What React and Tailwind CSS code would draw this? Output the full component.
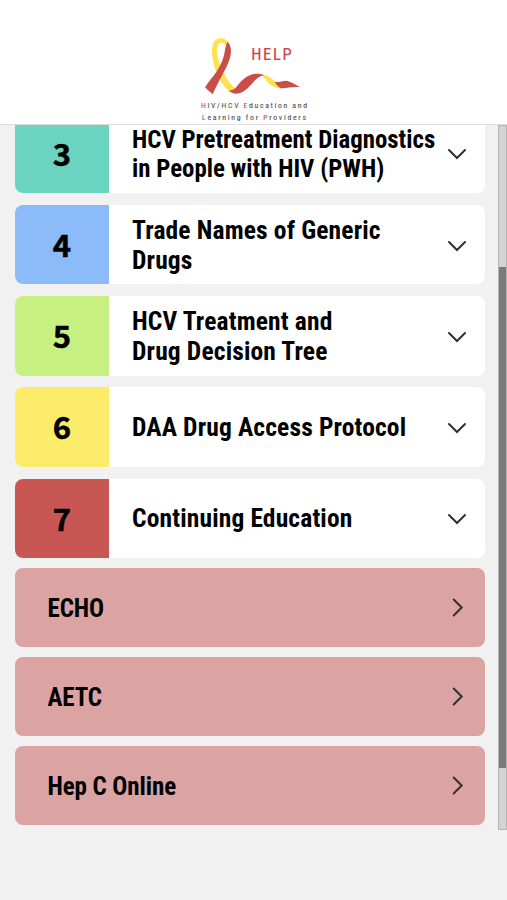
import React from 'react';

const sections = [
  { number: 3, color: 'bg-[#6bd4c1]', lines: ['HCV Pretreatment Diagnostics', 'in People with HIV (PWH)'], tight: true },
  { number: 4, color: 'bg-[#8bbcf9]', lines: ['Trade Names of Generic', 'Drugs'] },
  { number: 5, color: 'bg-[#c7f082]', lines: ['HCV Treatment and', 'Drug Decision Tree'] },
  { number: 6, color: 'bg-[#fcec69]', lines: ['DAA Drug Access Protocol'] },
  { number: 7, color: 'bg-[#c85652]', lines: ['Continuing Education'] },
];

const links = ['ECHO', 'AETC', 'Hep C Online'];

const Logo = () => (
  <svg
    width="120"
    height="90"
    viewBox="195 35 120 90"
    className="font-['Roboto_Condensed',Roboto,sans-serif] font-normal [font-stretch:75%]"
  >
    {/* yellow loop */}
    <path
      d="M228 42.500C226 39.500 224 38 221 38C215 38 212 43 212 50C212 59 215 71 219.500 79C222 84 226 88 229.500 92.500C232 92 234 90 235.500 88.300C231 85 226 78 223 71.500C220 65 217 57 217 51C217 46 218.500 42.500 221.500 42.500C223.500 42.500 225.500 44.500 226.500 48Z"
      fill="#fde250"
    />
    {/* red strand crossing it */}
    <path
      d="M227.500 41.500C230 44 231.200 48 231 52C230.500 60 226 68 222 75.500C218.500 82 215.500 88 212.700 94.300L205 87.500C208 82 213 77 216.700 71.500C221 65 224 58 225 50C225.500 47 226.500 44 227.500 41.500Z"
      fill="#c94e48"
    />
    {/* tail */}
    <path d="M261 74.300C266 74.500 271 77.500 275 81.500C277 84 279 86.500 281 88.300C277 88.500 273 87 270 84.500C267 82 264 77 261 74.300Z" fill="#fde250" />
    <path
      d="M229 90.500C232 90.500 234 89.500 236 87.500C240 82 245 76.500 251.700 74.500C256 73.300 261 73.500 264 75.300C259 76 256 79 253 82.500C249 87 245 91.500 239.500 93.300C236 94.300 232 94 229 90.500Z"
      fill="#c94e48"
    />
    <path d="M274.500 82C279 82.500 283 80.500 287 80.700C290 81.500 296 84.500 300 87.300C293 86.500 287 88.500 280.500 88.200C278 86.500 276.500 84.500 274.500 82Z" fill="#c94e48" />
    <text x="251.200" y="60" fontSize="16.500" fill="#cb4a46" stroke="#cb4a46" strokeWidth="0.200" letterSpacing="1.700">
      HELP
    </text>
    <text x="201" y="108.300" fontSize="7.800" fill="#55555c" stroke="#55555c" strokeWidth="0.120" textLength="106">
      <tspan fill="#e0424c" stroke="#e0424c">H</tspan>IV/HCV <tspan fill="#e0424c" stroke="#e0424c">E</tspan>ducation and
    </text>
    <text x="202" y="119.500" fontSize="7.800" fill="#55555c" stroke="#55555c" strokeWidth="0.120" textLength="104">
      <tspan fill="#e0424c" stroke="#e0424c">L</tspan>earning for <tspan fill="#e0424c" stroke="#e0424c">P</tspan>roviders
    </text>
  </svg>
);

const Chevron = ({ right }) => (
  <svg
    width="20"
    height="20"
    viewBox="0 0 20 20"
    fill="none"
    stroke="#303030"
    strokeWidth="2"
    strokeLinecap="round"
    className={right ? '-rotate-90' : ''}
  >
    <path d={right ? 'M2.500 6.700L10.500 14.700L18.500 6.700' : 'M2 7L10 15L18 7'} />
  </svg>
);

const SectionCard = ({ section }) => {
  const single = section.lines.length === 1;
  return (
    <button className="flex h-[79.500px] w-full shrink-0 items-center overflow-hidden rounded-lg bg-white pr-[18px] text-left">
      <span
        className={`flex h-full w-[94px] shrink-0 items-center justify-center pb-px font-['Noto_Sans_CJK_SC',sans-serif] text-[31px] font-bold [-webkit-text-stroke:0.5px_black] ${section.color}`}
      >
        {section.number}
      </span>
      <span
        className={`flex-1 pl-[23px] ${single ? '' : 'pt-px'} ${
          section.tight ? 'pt-[2px] text-[24.850px] leading-[29px]' : 'text-[25.500px] leading-[30.200px] tracking-[0.15px]'
        }`}
      >
        {section.lines.map((line) => (
          <span key={line} className="block whitespace-nowrap">{line}</span>
        ))}
      </span>
      <Chevron />
    </button>
  );
};

const LinkCard = ({ label }) => (
  <button className="flex h-[79px] w-full shrink-0 items-center justify-between rounded-lg bg-[#dba3a1] pr-[18px] pl-[32.500px] text-[25px] tracking-[-0.1px]">
    <span className="pt-[2px]">{label}</span>
    <Chevron right />
  </button>
);

export default function App() {
  return (
    <div className="h-[900px] w-[507px] overflow-hidden bg-[#f1f1f1] text-black">
      <header className="flex h-[125px] justify-center border-b border-[#dddddd] bg-white pt-[35px] pl-[3px]">
        <Logo />
      </header>
      <div className="flex h-[705px] overflow-hidden">
        <main className="-mt-[11.500px] flex-1 pr-[13px] pl-[15px] font-['Roboto_Condensed',Roboto,sans-serif] font-bold [font-stretch:75%]">
          <div className="flex flex-col gap-[11.800px]">
            {sections.map((section) => (
              <SectionCard key={section.number} section={section} />
            ))}
          </div>
          <div className="mt-[10px] flex flex-col gap-[10px]">
            {links.map((label) => (
              <LinkCard key={label} label={label} />
            ))}
          </div>
        </main>
        <div className="w-[9px] border border-[#b5b5b5] bg-[#d3d3d3] pt-[141px]">
          <div className="h-[501px] bg-[#7a7a7a]" />
        </div>
      </div>
    </div>
  );
}
